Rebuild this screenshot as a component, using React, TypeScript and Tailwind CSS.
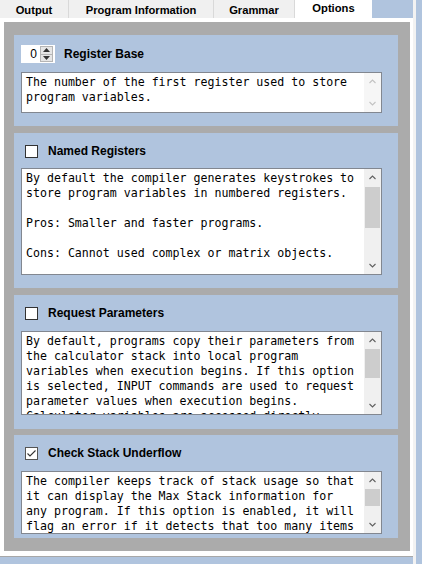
import React from 'react';

const sans = { fontFamily: '"Liberation Sans", Arial, sans-serif' };
const mono = { fontFamily: '"DejaVu Sans Mono", "Liberation Mono", monospace' };

const Chevron = ({ up, color }: { up?: boolean; color: string }) => (
  <svg width="7" height="5" viewBox="0 0 7 5">
    <path d={up ? 'M0.5 4 L3.5 1 L6.5 4' : 'M0.5 1 L3.5 4 L6.5 1'} fill="none" stroke={color} strokeWidth="1.1" />
  </svg>
);

const ScrollBox = ({ lines, box, thumb, disabled }: { lines: string[]; box: string; thumb?: string; disabled?: boolean }) => {
  const c = disabled ? '#c2c2c2' : '#606060';
  return (
    <div className={`flex bg-white border border-[#828790] overflow-hidden w-[361px] ${box}`}>
      <div className="flex-1 pl-[4px] pt-[2px] text-[11.6px] leading-[15px] text-black whitespace-pre overflow-hidden" style={mono}>
        {lines.map((l, i) => (
          <div key={i} className="h-[15px]">{l}</div>
        ))}
      </div>
      <div className={`w-[17px] flex flex-col ${disabled ? 'bg-[#f6f6f6]' : 'bg-[#f0f0f0]'}`}>
        <div className="h-[17px] flex items-center justify-center"><Chevron up color={c} /></div>
        <div className="flex-1 px-[1px]">
          {thumb && <div className={`bg-[#cdcdcd] ${thumb}`} />}
        </div>
        <div className="h-[17px] flex items-center justify-center"><Chevron color={c} /></div>
      </div>
    </div>
  );
};

const CheckBox = ({ checked }: { checked?: boolean }) => (
  <svg width="13" height="13" viewBox="0 0 13 13" className="ml-[4px] shrink-0">
    <rect x="0.5" y="0.5" width="12" height="12" fill="white" stroke={checked ? '#555' : '#333'} />
    {checked && <path d="M2.5 6.5 L5 9 L10.5 3.5" fill="none" stroke="#333" strokeWidth="1.1" />}
  </svg>
);

const Label = ({ children }: { children: React.ReactNode }) => (
  <span className="text-[12px] font-bold text-black leading-none" style={sans}>{children}</span>
);

const Spinner = () => (
  <div className="w-[34px] h-[18px] bg-white flex">
    <div className="flex-1 flex items-center justify-end pr-[3px] text-[12px] text-black" style={sans}>0</div>
    <div className="w-[13px] my-[1px] mr-[2px] flex flex-col border border-[#b5b5b5] bg-[#e6e6e6]">
      <div className="flex-1 flex items-center justify-center border-b border-[#b5b5b5]">
        <svg width="7" height="4" viewBox="0 0 7 4"><path d="M0 4 L3.5 0 L7 4 Z" fill="#333" /></svg>
      </div>
      <div className="flex-1 flex items-center justify-center">
        <svg width="7" height="4" viewBox="0 0 7 4"><path d="M0 0 L3.5 4 L7 0 Z" fill="#333" /></svg>
      </div>
    </div>
  </div>
);

const tabs = [
  { name: 'Output', w: 'w-[69px]' },
  { name: 'Program Information', w: 'w-[145px]' },
  { name: 'Grammar', w: 'w-[81px]' },
];

export default function App() {
  return (
    <div className="w-[422px] h-[564px] bg-[#b0c4de] flex overflow-hidden">
      <div className="w-[413px] flex flex-col">
        {/* Tab strip */}
        <div className="h-[18px] flex">
          {tabs.map(t => (
            <div key={t.name} className={`${t.w} h-[18px] bg-[#f0f0f0] border-r border-[#d9d9d9] flex items-center justify-center pt-[2px] text-[11.2px] font-bold text-black`} style={sans}>
              {t.name}
            </div>
          ))}
          <div className="w-[77px] h-[18px] bg-white flex items-center justify-center pb-[2px] text-[11.2px] font-bold text-black" style={sans}>
            Options
          </div>
        </div>

        {/* Tab page */}
        <div className="h-[539px] bg-white pt-[4px] pl-[4px] pr-[3px] border-b border-[#a8a8a8]">
          <div className="h-[529px] bg-[#ababab] pl-[10px] pt-[13px] flex flex-col overflow-hidden">
            {/* Register Base */}
            <div className="w-[384px] h-[91px] bg-[#b0c4de] px-[7px] pt-[10px] shrink-0">
              <div className="h-[18px] flex items-center gap-[9px]">
                <Spinner />
                <Label>Register Base</Label>
              </div>
              <div className="mt-[9px]">
                <ScrollBox
                  box="h-[41px]"
                  disabled
                  lines={['The number of the first register used to store', 'program variables.']}
                />
              </div>
            </div>

            {/* Named Registers */}
            <div className="w-[384px] h-[155px] mt-[7px] bg-[#b0c4de] px-[7px] pt-[10px] shrink-0">
              <div className="h-[16px] flex items-center gap-[10px]">
                <CheckBox />
                <Label>Named Registers</Label>
              </div>
              <div className="mt-[9px]">
                <ScrollBox
                  box="h-[107px]"
                  thumb="h-[41px] mt-[1px]"
                  lines={[
                    'By default the compiler generates keystrokes to',
                    'store program variables in numbered registers.',
                    '',
                    'Pros: Smaller and faster programs.',
                    '',
                    'Cons: Cannot used complex or matrix objects.',
                  ]}
                />
              </div>
            </div>

            {/* Request Parameters */}
            <div className="w-[384px] h-[134px] mt-[7px] bg-[#b0c4de] px-[7px] pt-[10px] shrink-0">
              <div className="h-[16px] flex items-center gap-[10px]">
                <CheckBox />
                <Label>Request Parameters</Label>
              </div>
              <div className="mt-[10px]">
                <ScrollBox
                  box="h-[84px]"
                  thumb="h-[29px]"
                  lines={[
                    'By default, programs copy their parameters from',
                    'the calculator stack into local program',
                    'variables when execution begins. If this option',
                    'is selected, INPUT commands are used to request',
                    'parameter values when execution begins.',
                    'Calculator variables are accessed directly.',
                  ]}
                />
              </div>
            </div>

            {/* Check Stack Underflow */}
            <div className="w-[384px] h-[103px] mt-[6px] bg-[#b0c4de] px-[7px] pt-[10px] shrink-0">
              <div className="h-[16px] flex items-center gap-[10px]">
                <CheckBox checked />
                <Label>Check Stack Underflow</Label>
              </div>
              <div className="mt-[10px]">
                <ScrollBox
                  box="h-[63px]"
                  thumb="h-[17px]"
                  lines={[
                    'The compiler keeps track of stack usage so that',
                    'it can display the Max Stack information for',
                    'any program. If this option is enabled, it will',
                    'flag an error if it detects that too many items',
                  ]}
                />
              </div>
            </div>
          </div>
        </div>
      </div>
      <div className="w-[3px] h-full bg-[#f2f2f2]" />
    </div>
  );
}
